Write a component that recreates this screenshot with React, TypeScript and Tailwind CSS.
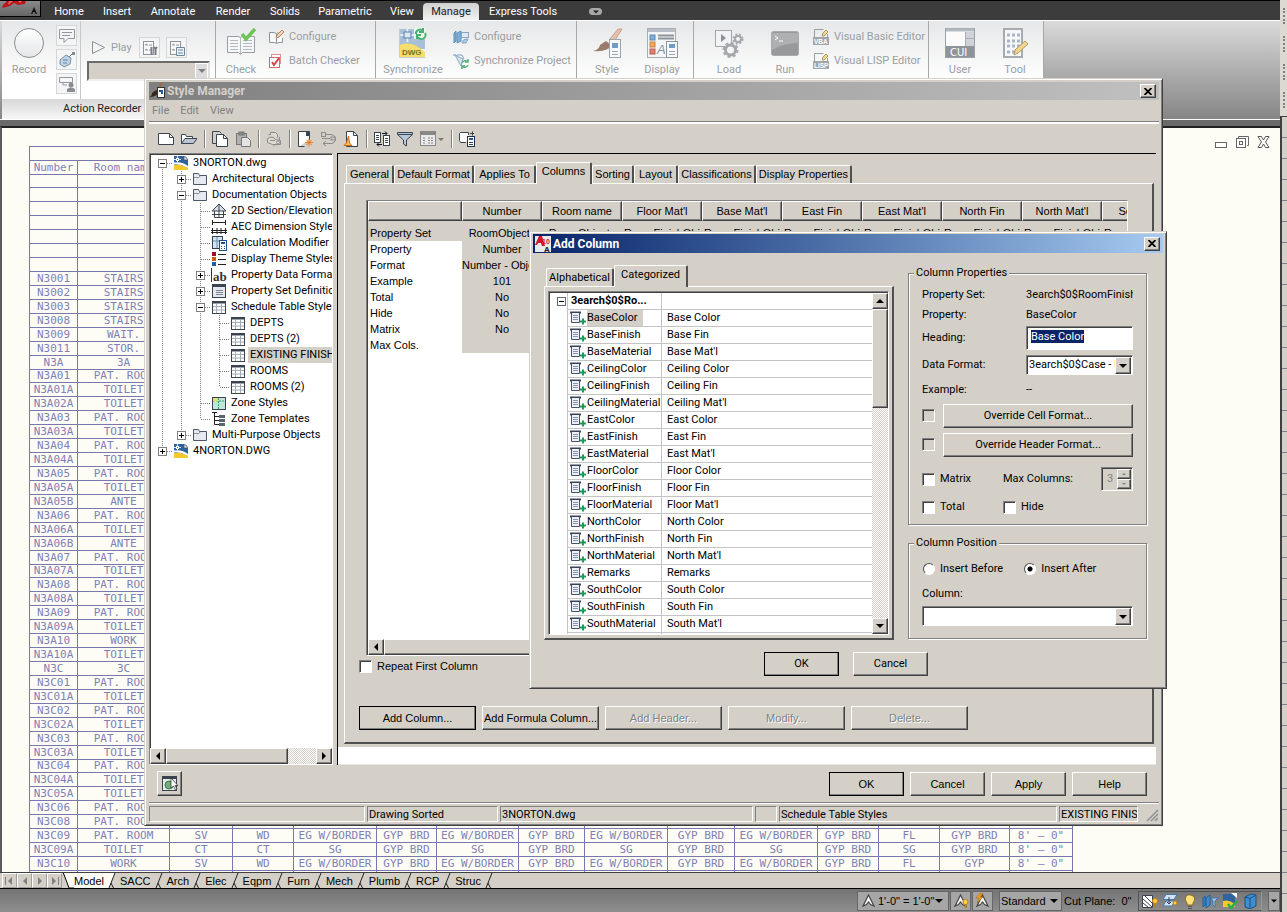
import React from "react"
import clsx from "clsx"

// ============================================================
// Shared styles
// ============================================================

const TAHOMA = "font-[Roboto,'Liberation_Sans',sans-serif]"
const MS_SANS = "font-['Liberation_Sans',Arial,sans-serif]"
const CAD = "font-['DejaVu_Sans_Mono','Liberation_Mono',monospace]"

const RAISED =
  "border border-t-white border-l-white border-b-[#404040] border-r-[#404040] shadow-[inset_-1px_-1px_0_#808080]"
const SUNKEN =
  "border border-t-[#808080] border-l-[#808080] border-b-white border-r-white shadow-[inset_1px_1px_0_#404040]"
const DITHER =
  "bg-[repeating-conic-gradient(#ffffff_0_25%,#d4d0c8_0_50%)] bg-[length:2px_2px]"

// ============================================================
// Small controls
// ============================================================

const PushButton: React.FC<{
  children: React.ReactNode
  className?: string
  isDefault?: boolean
  disabled?: boolean
}> = ({ children, className, isDefault, disabled }) => (
  <button
    disabled={disabled}
    className={clsx(
      "h-6 shrink-0 bg-[#d4d0c8] text-center whitespace-nowrap",
      RAISED,
      isDefault && "outline outline-1 -outline-offset-1 outline-black",
      disabled ? "text-[#808080] [text-shadow:1px_1px_0_#fff]" : "text-black",
      className
    )}
  >
    {children}
  </button>
)

const CloseButton = () => (
  <button
    aria-label="Close"
    className={clsx("flex h-[14px] w-4 items-center justify-center bg-[#d4d0c8]", RAISED)}
  >
    <svg width="8" height="7" viewBox="0 0 8 7" stroke="#000" strokeWidth="1.8">
      <path d="M0.5 0 L7.5 7 M7.5 0 L0.5 7" />
    </svg>
  </button>
)

const ARROWS = {
  up: "M0 6 L4 2 L8 6Z",
  down: "M0 2 L8 2 L4 6Z",
  left: "M6 0 L2 4 L6 8Z",
  right: "M2 0 L6 4 L2 8Z",
}

const Arrow: React.FC<{ dir: keyof typeof ARROWS; size?: number; color?: string }> = ({
  dir,
  size = 8,
  color = "#000",
}) => (
  <svg width={size} height={size} viewBox="0 0 8 8" fill={color}>
    <path d={ARROWS[dir]} />
  </svg>
)

const ScrollButton: React.FC<{ dir: keyof typeof ARROWS }> = ({ dir }) => (
  <button
    aria-label={`Scroll ${dir}`}
    className={clsx("flex size-4 shrink-0 items-center justify-center bg-[#d4d0c8]", RAISED)}
  >
    <Arrow dir={dir} />
  </button>
)

const CheckBox: React.FC<{ label?: string; name: string; disabled?: boolean }> = ({
  label,
  name,
  disabled,
}) => (
  <label className="flex items-center gap-[5px]">
    <input
      type="checkbox"
      aria-label={label ?? name}
      disabled={disabled}
      className={clsx("size-[13px] appearance-none", SUNKEN, disabled ? "bg-[#d4d0c8]" : "bg-white")}
    />
    {label}
  </label>
)

const Radio: React.FC<{ label: string; checked?: boolean }> = ({ label, checked }) => (
  <label className="flex items-center gap-[5px]">
    <input
      type="radio"
      name="position"
      defaultChecked={checked}
      className="size-3 appearance-none rounded-full border border-t-[#505050] border-r-white border-b-white border-l-[#505050] bg-white checked:bg-[radial-gradient(circle,#000_2px,#fff_3px)]"
    />
    {label}
  </label>
)

const Combo: React.FC<{ label: string; value: string; id: string }> = ({ label, value, id }) => (
  <div className={clsx("relative h-5 w-full overflow-hidden bg-white pr-4", SUNKEN)}>
    <select id={id} aria-label={label} className="h-full w-full appearance-none bg-transparent pl-[2px]">
      <option>{value}</option>
    </select>
    <span
      className={clsx(
        "pointer-events-none absolute top-px right-px bottom-0 flex w-4 items-center justify-center bg-[#d4d0c8]",
        RAISED
      )}
    >
      <Arrow dir="down" />
    </span>
  </div>
)

// ============================================================
// Icons
// ============================================================

const Icon: React.FC<{ w?: number; h?: number; children: React.ReactNode }> = ({
  w = 16,
  h = 16,
  children,
}) => (
  <svg
    width={w}
    height={h}
    viewBox={`0 0 ${w} ${h}`}
    fill="none"
    stroke="#3a4450"
    className="shrink-0"
  >
    {children}
  </svg>
)

const DwgIcon = () => (
  <Icon>
    <rect x="1" y="1" width="14" height="14" fill="#2f62a0" stroke="none" />
    <path d="M1 15V10q6-2 14 3v2z" fill="#f3c92c" stroke="none" />
    <path d="M1 9.500q7-1 14 3.500V11Q9 6 1 7.500z" fill="#fff" stroke="none" />
    <path d="M4.500 1v6M1 4.500h7" stroke="#cfe2f5" />
    <rect x="3.500" y="3.500" width="2" height="2" fill="#2f62a0" stroke="#fff" />
    <path d="M11 0h5v5z" fill="#fff" stroke="none" />
    <path d="M11 1v4h4" fill="#dfe6ee" stroke="#555" strokeWidth=".8" />
  </Icon>
)

const FolderIcon = () => (
  <Icon>
    <path d="M1.500 13.500v-11h5l1 2h7v9z" fill="#e6eaf0" stroke="#4b5563" />
    <path d="M2 6.500h5l1-1.500" stroke="#8a94a2" />
  </Icon>
)

const HouseIcon = () => (
  <Icon>
    <path d="M1 8 8 1l7 7z" fill="#d8dee8" />
    <path d="M3.500 8v6.500h9V8M8 1v14M1 11.500h14" />
  </Icon>
)

const DimIcon = () => (
  <Icon>
    <path d="M1.500 1v5M14.500 1v5M1 3.500h14M1.500 9v6M6 9v6M10 9v6M14.500 9v6M0 11.500h16M0 13.500h16" stroke="#222" />
  </Icon>
)

const CalcIcon = () => (
  <Icon>
    <rect x="1.500" y="1.500" width="10" height="12" fill="#cfe3f4" />
    <path d="M6 2v11M2 6h9" stroke="#6b8fb3" />
    <rect x="8.500" y="5.500" width="7" height="10" fill="#fff" stroke="#205090" />
    <path d="M10 8h4" stroke="#205090" strokeWidth="2" />
    <path d="M10 11.500h1M13 11.500h1M10 13.500h1M13 13.500h1" stroke="#205090" />
  </Icon>
)

const ThemeIcon = () => (
  <Icon>
    <path d="M7 3.500h8M7 8.500h8M7 13.500h8" stroke="#222" />
    <rect x="1" y="1" width="4" height="4" fill="#a01020" stroke="none" />
    <rect x="1" y="6" width="4" height="4" fill="#d05a10" stroke="none" />
    <rect x="1" y="11" width="4" height="4" fill="#2060a0" stroke="none" />
  </Icon>
)

const DataFormatIcon = () => (
  <svg width="16" height="16" viewBox="0 0 16 16" className="shrink-0">
    <path d="M.5 1v14" stroke="#333" />
    <text x="2" y="14" fontFamily="Liberation Serif" fontWeight="bold" fontSize="13" fill="#333">
      ab
    </text>
  </svg>
)

const PropSetIcon = () => (
  <Icon>
    <rect x="1.500" y="1.500" width="13" height="13" fill="#e4e8ee" />
    <path d="M2 3h12" strokeWidth="2" />
    <path d="M5 7.500h7M5 9.500h7M5 11.500h7" stroke="#7c8794" />
  </Icon>
)

const TableIcon = () => (
  <Icon>
    <rect x="1.500" y="2.500" width="13" height="12" fill="#fff" />
    <path d="M2 3.500h12" strokeWidth="2" />
    <path d="M2 7.500h12M2 11h12M5.500 5v9M10.500 5v9" stroke="#a4acb6" />
  </Icon>
)

const ZoneIcon = () => (
  <Icon>
    <rect x="1.500" y="2.500" width="13" height="12" fill="#bfe6d8" />
    <path d="M2 6h12M7.500 3v11" stroke="#2f9c78" strokeDasharray="2 1" />
    <path d="M2 3.500h5v3H2z" fill="#ecdc6c" stroke="none" />
  </Icon>
)

const ZoneTemplateIcon = () => (
  <Icon>
    <path d="M1 1.500h5M3.500 1v12.500H8M3.500 5.500H8M3.500 9.500H8" stroke="#222" />
    <path d="M8 5.500h6M8 9.500h6M8 13.500h6" stroke="#5a6470" strokeWidth="3" />
  </Icon>
)

const PropertyIcon = () => (
  <svg width="17" height="15" viewBox="0 0 17 15" fill="none" className="shrink-0">
    <path d="M0 1.500h11" stroke="#3a4258" strokeWidth="2" />
    <path d="M1.500 2v9.500h8V2" fill="#eef0f8" stroke="#4a5268" />
    <path d="M3 4.500h5M3 6.500h5M3 8.500h5" stroke="#8a92b4" />
    <path d="M13 7.500v6M10 10.500h6" stroke="#1e9a58" strokeWidth="2" />
  </svg>
)

const AcadIcon = () => (
  <svg width="16" height="16" viewBox="0 0 16 16" className="shrink-0 font-['Liberation_Sans']">
    <rect width="16" height="16" fill="#e9eaee" />
    <path d="M0 9 4 0h3l3 10H7L6 7H3L2 9z" fill="#d01828" />
    <text x="7" y="8" fontSize="7" fontWeight="bold" fill="#d01828">10</text>
    <text x="9" y="16" fontSize="8" fontWeight="bold" fill="#111">A</text>
  </svg>
)

const BrushIcon = () => (
  <Icon>
    <path d="M0 14 Q3 13 3 10 L7 7 10 9 Q8 14 0 14z" fill="#3a2a1e" stroke="none" />
    <path d="M8 7 13 0" stroke="#a06a48" strokeWidth="2" />
    <rect x="8.500" y="4.500" width="7" height="10" fill="#fff" stroke="#333" />
    <path d="M10 8h3v3" stroke="#2058a0" strokeWidth="2" />
  </Icon>
)

/* Style Manager toolbar */

const TOOLBAR: ({ name: string; icon: React.ReactNode } | null)[] = [
  { name: "New drawing", icon: <Icon><path d="M.5 13.500v-11h11l4 4v7z" fill="#fff" /><path d="M11.500 2.500v4h4" /></Icon> },
  { name: "Open drawing", icon: <Icon><path d="M.5 12.500v-9h4l1 2h6v2" fill="#fff" /><path d="M.5 12.500 4 7.500h12l-3.500 5z" fill="#b8c4d4" /></Icon> },
  null,
  { name: "Copy", icon: <Icon><path d="M.5 12.500v-12h7l2 2M.5 12.500H4" /><path d="M4.500 15.500v-12h7l4 4v8z" fill="#fff" /><path d="M11.500 3.500v4h4" /></Icon> },
  { name: "Paste", icon: <Icon><g stroke="#777"><rect x="1.500" y="2.500" width="10" height="11" fill="#b0b0b0" /><rect x="4" y="1" width="5" height="3" fill="#888" /><path d="M6.500 15.500v-9h6l3 3v6z" fill="#e4e4e4" /></g></Icon> },
  null,
  { name: "Edit style", icon: <Icon><g stroke="#8a8a8a"><path d="M2.500 3.500h2v-2h5l2 2v3M1.500 7.500q5-3 8 1l5 1v4h-8l-5-2z" fill="#dedbd4" /><path d="M4 9.500h5M8 13.500v2M13.500 6v3" /><circle cx="12" cy="11.500" r="1.500" /></g></Icon> },
  null,
  { name: "New style", icon: <Icon><path d="M1.500 15.500V.5h11V9M1.500 15.500h6" fill="#fff" /><path d="M9 1h4v4H9z" fill="#345" stroke="none" /><path d="M12 7.500v8M8 11.500h8M9.500 9l5 5M14.500 9l-5 5" stroke="#f07818" /></Icon> },
  { name: "Set from", icon: <Icon><g stroke="#8a8a8a"><rect x="1.500" y="1.500" width="4" height="4" /><path d="M5.500 3.500H11a4 4 0 0 1 0 9H3M6 10l-3 2.500L6 15M2 7.500h8" /><rect x="11" y="6" width="4" height="3" fill="#ccc" /></g></Icon> },
  { name: "Purge", icon: <Icon><path d="M3.500 15.500V.5h7l4 4v11z" fill="#fff" /><path d="M10.500.5v4h4" /><path d="M1 14.500h8L6.500 12 5.500 5 3.500 12z" fill="#f6c060" stroke="#d06a10" /></Icon> },
  null,
  { name: "Toggle view", icon: <Icon><rect x=".5" y="1.500" width="6" height="10" fill="#fff" /><rect x="9.500" y="4.500" width="6" height="10" fill="#fff" /><path d="M2 4.500h3M2 6.500h3M2 8.500h3M11 7.500h3M11 9.500h3M11 11.500h3" /><path d="M8 2.500h5M11 .5l2 2-2 2M8 13.500H3M5 11.500l-2 2 2 2" stroke="#111" /></Icon> },
  { name: "Filter", icon: <Icon><path d="M.5 1.500h15v2L9.500 9v6l-3-2V9L.5 3.500z" fill="#b8c8d8" /><path d="M1 3.500h14" /></Icon> },
  { name: "Views", icon: <svg width="24" height="16" viewBox="0 0 24 16" fill="none" stroke="#888" className="shrink-0"><rect x=".5" y=".5" width="15" height="14" fill="#e8e8e8" /><path d="M1 2.500h14" strokeWidth="3" /><path d="M3 7h3M8 7h5M3 9.500h3M8 9.500h5M3 12h3M8 12h5" strokeDasharray="2 1" /><path d="M18 7h6l-3 3z" fill="#777" stroke="none" /></svg> },
  null,
  { name: "Inline edit", icon: <Icon><path d="M7 11.500H1.500l-1-2v-7l1-1h8V4" fill="#fff" /><rect x="8.500" y="5.500" width="7" height="10" fill="#fff" stroke="#20304a" /><path d="M10 8h4" stroke="#2058a0" strokeWidth="2" /><path d="M10 11.500h4M10 13.500h4M11 2.500h4M13.500 .5v4" /></Icon> },
]

/* Ribbon, large */

const CheckStdIcon = () => (
  <Icon w={30} h={30}>
    <g stroke="#9a9ea4">
      <path d="M1.500 8.500h11l2 1 2-1h12v16h-12l-2 2-2-2h-11z" fill="#f6f7f8" />
      <path d="M14.500 10v16M4 12.500h8M4 15.500h8M4 18.500h8M4 21.500h8M17 12.500h9M17 15.500h9M17 18.500h9M17 21.500h9" stroke="#b5b9be" />
    </g>
    <path d="M16 6l4 5 9-10" stroke="#6fc455" strokeWidth="3.500" />
  </Icon>
)

const SyncIcon = () => (
  <Icon w={28} h={30}>
    <rect x="1" y="1" width="25" height="20" fill="#a9c0d8" stroke="none" />
    <path d="M1 17 Q12 12 26 24v5H1z" fill="#f4df6a" stroke="none" />
    <path d="M1 7h15M8.500 1v13" stroke="#eef4fa" strokeWidth="1.500" />
    <rect x="5" y="4" width="7" height="6" stroke="#5d7fa8" fill="#dce8f4" />
    <rect x="15" y="0" width="12" height="11" fill="#eef6f0" stroke="none" />
    <path d="M17 6a4 4 0 0 1 7-3M26 5a4 4 0 0 1-7 4M24 0v4h-4M18 11V7h4" stroke="#46b070" strokeWidth="2" />
    <text x="3" y="27" fontFamily="Liberation Sans" fontWeight="bold" fontSize="8" fill="#77702c" stroke="none">DWG</text>
    <path d="M.5.500v29h26" stroke="#c9cdd2" />
  </Icon>
)

const StyleIcon = () => (
  <Icon w={30} h={30}>
    <path d="M17 12 26 1l4 0-8 13z" fill="#e5bfa9" stroke="#c7a48e" />
    <path d="M1 23Q7 22 8 17L14 13l5 4Q17 24 1 23z" fill="#9a7a6a" stroke="none" />
    <rect x="17.500" y="11.500" width="11" height="18" fill="#f8f9fa" stroke="#9aa4ae" />
    <path d="M20 15h6v5h-6z" fill="#6f9cc8" stroke="none" />
    <path d="M20 23.500h6M20 26.500h6" stroke="#9aa4ae" />
  </Icon>
)

const DisplayIcon = () => (
  <Icon w={32} h={32}>
    <rect x="1.500" y="1.500" width="28" height="29" fill="#f3f5f7" stroke="#a6adb5" />
    <path d="M2 3.500h27" stroke="#b9bfc6" strokeWidth="3" />
    <rect x="4" y="8" width="5" height="5" fill="#7fb0dc" stroke="#5d87b0" />
    <rect x="4" y="15" width="5" height="5" fill="#f5a760" stroke="#cf8440" />
    <rect x="4" y="22" width="5" height="5" fill="#e07f6d" stroke="#b75f50" />
    <path d="M12 8.500h16M12 11.500h16" stroke="#8c949c" strokeWidth="2" />
    <text x="11" y="27" fontFamily="Liberation Sans" fontStyle="italic" fontSize="13" fill="#8c949c" stroke="none">A</text>
    <rect x="20.500" y="14.500" width="11" height="16" fill="#f8f9fa" stroke="#8c949c" />
    <rect x="23" y="17" width="6" height="4" fill="#6f9cc8" stroke="none" />
    <path d="M23 24.500h6M23 27.500h6" stroke="#9aa4ae" />
  </Icon>
)

const LoadIcon = () => (
  <Icon w={30} h={30}>
    <rect x="1.500" y="2.500" width="16" height="16" fill="#f2f3f4" stroke="#a2a6aa" />
    <path d="M7 6v8l5-4z" fill="#8c9196" stroke="none" />
    <circle cx="16.500" cy="22" r="5" stroke="#a4a8ac" strokeWidth="3" fill="#f6f6f6" />
    <circle cx="16.500" cy="22" r="7" stroke="#a4a8ac" strokeWidth="2" strokeDasharray="3 2.500" />
    <circle cx="24" cy="11" r="3" stroke="#a4a8ac" strokeWidth="2" fill="#f6f6f6" />
    <circle cx="24" cy="11" r="4.500" stroke="#a4a8ac" strokeWidth="2" strokeDasharray="2 1.600" />
  </Icon>
)

const RunIcon = () => (
  <Icon w={30} h={30}>
    <rect x="1.500" y="3.500" width="27" height="24" rx="2" fill="#98999b" stroke="#a8aaac" />
    <path d="M2 5h26v10q-14 0-26 7z" fill="#aeb0b2" stroke="none" />
    <path d="M5 8l3 2-3 2M9 13h4" stroke="#fff" />
  </Icon>
)

const CuiIcon = () => (
  <Icon w={30} h={30}>
    <rect x=".5" y=".5" width="29" height="29" fill="#fbfbfb" stroke="#9aa0a8" />
    <path d="M1 2h28" stroke="#b4bac2" strokeWidth="3" />
    <rect x="20" y="4" width="9" height="14" fill="#cfd3d8" stroke="none" />
    <path d="M20.500 4v15M21 10.500h8" stroke="#a9afb6" />
    <rect x="1" y="18" width="28" height="11" fill="#8f949b" stroke="none" />
    <text x="5" y="27.500" fontFamily="DejaVu Sans" fontSize="10" fill="#fff" stroke="none">CUI</text>
  </Icon>
)

const ToolPaletteIcon = () => (
  <Icon w={27} h={30}>
    <path d="M2 1h18v28H2z" fill="#f6f7f8" stroke="#a6abb1" strokeWidth="2" />
    <path d="M5 7h13M5 13h13M5 18h13M5 24h8" stroke="#a9b4c4" strokeWidth="3" strokeDasharray="3 2" />
    <path d="M12 27l1-5 10-9 3 3-10 9z" fill="#f0d68c" stroke="#b39b60" />
  </Icon>
)

/* Ribbon, small */

const BookPenIcon = () => (
  <Icon>
    <path d="M1.500 3.500h5l2 1 2-1M1.500 3.500v10h5l2 1 2-1h4V9M8.500 5v9" stroke="#8f9399" fill="#f8f8f8" />
    <path d="M8 9l1-3 5-5 2 2-5 5z" fill="#f2d0ac" stroke="#b58c70" />
  </Icon>
)

const BatchIcon = () => (
  <Icon>
    <rect x="3.500" y="1.500" width="9" height="9" fill="#fff" stroke="#e09090" />
    <rect x="1.500" y="4.500" width="10" height="10" fill="#fff" stroke="#d86a6a" />
    <path d="M4 9l2 3 5-7" stroke="#cc4a4a" strokeWidth="2" />
  </Icon>
)

const CubeCfgIcon = () => (
  <Icon>
    <path d="M1 4l2-2v10l-2 2zM4 4l4-2v10l-4 2z" fill="#7fb0dc" stroke="#5b8fbe" />
    <rect x="8.500" y="3.500" width="7" height="5" fill="#dfeaf4" stroke="#88a4c0" />
    <path d="M9 14q0-4 6-4l-2 4z" fill="#a8c8e4" stroke="#88a4c0" />
  </Icon>
)

const CubeSyncIcon = () => (
  <Icon>
    <path d="M0 2l3 0 5 7M4 2h5l2 4" stroke="#7f9fbc" />
    <path d="M2 2l6 11 2-7z" fill="#d5e4f0" stroke="#8aa8c4" />
    <path d="M9 10a3.500 3.500 0 0 1 6-1M15 12a3.500 3.500 0 0 1-6 1M15 6v3h-3M9 16v-3h3" stroke="#56b078" strokeWidth="1.500" />
  </Icon>
)

const EditorIcon: React.FC<{ tag: string }> = ({ tag }) => (
  <Icon>
    <path d="M1.500 8V.5h9M14.500 5v3" stroke="#9a9ea4" />
    <path d="M9 7l1-3 3-3 2 2-4 4z" fill="#f2d890" stroke="#b09a60" />
    <rect x="0" y="8" width="16" height="8" fill="#a2a6ac" stroke="none" />
    <text x="1" y="14.500" fontFamily="Liberation Sans" fontWeight="bold" fontSize="6.500" fill="#fff" stroke="none">{tag}</text>
  </Icon>
)

const BubbleIcon = () => (
  <Icon><path d="M.5 1.500h15v9H9l-4 4v-4H.5zM3 4.500h10M3 7.500h8" stroke="#93979c" /></Icon>
)
const RequestIcon = () => (
  <Icon><path d="M1 8l6-5 5 3-1 6-6 3-4-3z" fill="#bfd4e6" stroke="#7f8c98" /><path d="M4 8h5M4 11h4M10 5l4-4" stroke="#5f87ac" /><rect x="13" y="0" width="3" height="3" fill="#888" stroke="none" /></Icon>
)
const UserInputIcon = () => (
  <Icon><path d="M.5 1.500h13v5H.5zM4 6v3h4" stroke="#93979c" /><circle cx="12" cy="9" r="2.500" fill="#8a8e92" stroke="none" /><path d="M8 16v-3q4-3 8 0v3z" fill="#8a8e92" stroke="none" /></Icon>
)
const ActionIcon: React.FC<{ alt?: boolean }> = ({ alt }) => (
  <Icon>
    <rect x="1.500" y="1.500" width="10" height="13" fill="#f8f8f8" stroke="#8f9398" />
    <path d="M3 5l2-1v2M3 10l2-1v2M7 5h3M7 10h3" stroke="#8f9398" />
    {alt ? (
      <path d="M7.500 7.500h8v8h-8zM9 10h5M9 13h5" fill="#eef2f6" stroke="#6f87a0" />
    ) : (
      <path d="M9.500 7v8M13.500 15V9M12 7l1.500 2L15 7" stroke="#7a7e84" strokeWidth="2" />
    )}
  </Icon>
)

// ============================================================
// Ribbon
// ============================================================

const MENU = [
  { label: "Home", width: "w-12" },
  { label: "Insert", width: "w-12" },
  { label: "Annotate", width: "w-16" },
  { label: "Render", width: "w-14" },
  { label: "Solids", width: "w-12" },
  { label: "Parametric", width: "w-[72px]" },
  { label: "View", width: "w-[42px]" },
  { label: "Manage", width: "w-14", active: true },
  { label: "Express Tools", width: "w-[88px]" },
]

const MenuBar = () => (
  <nav className="flex h-5 shrink-0 items-end border-t border-black bg-[#3c3c3c] text-[11px] text-white">
    <button
      aria-label="Application menu"
      className="mr-1 h-4 w-[41px] self-start border-r border-b border-black bg-linear-to-b from-[#8a8a8a] to-[#666]"
    >
      <svg width="40" height="15" viewBox="0 0 40 15">
        <path d="M3 4 8 -1h18l-1 4-7 1-4-2-4 3-8 2z" fill="#b8141c" />
        <path d="M9 0h4l-5 4zM17 -1h6l-3 3z" fill="#f06a60" />
        <path d="M31 13l3-7 3 7h-1.500l-.8-2h-1.500l-.8 2z" fill="#111" />
      </svg>
    </button>
    {MENU.map((m) => (
      <button
        key={m.label}
        className={clsx(
          "h-[17px] text-center leading-[15px] whitespace-nowrap",
          m.width,
          m.active && "rounded-t-sm bg-linear-to-b from-[#d0d0d0] to-[#f2f2f2] text-[#222]"
        )}
      >
        {m.label}
      </button>
    ))}
    <span className="mb-[5px] ml-[22px] flex h-[7px] w-[13px] items-center justify-center rounded-sm bg-[#a8a8a8]">
      <Arrow dir="down" size={6} color="#222" />
    </span>
  </nav>
)

const BigTool: React.FC<{ icon: React.ReactNode; label: string; className: string }> = ({
  icon,
  label,
  className,
}) => (
  <button className={clsx("flex flex-col items-center gap-[3px] pt-[6px]", className)}>
    <span className="flex h-8 items-center">{icon}</span>
    <span className="leading-4">{label}</span>
  </button>
)

const SmallTool: React.FC<{ icon: React.ReactNode; label: string }> = ({ icon, label }) => (
  <button className="flex h-6 items-center gap-[5px] whitespace-nowrap">
    {icon}
    {label}
  </button>
)

const Panel: React.FC<{ className: string; children: React.ReactNode }> = ({ className, children }) => (
  <div
    className={clsx(
      "flex shrink-0 items-start border-r border-[#a8a8a8] bg-linear-to-b from-[#e6e7e8] to-white to-60%",
      className
    )}
  >
    {children}
  </div>
)

const FRAMED = "flex items-center justify-center border border-[#d4d6d8] bg-[#f4f5f6]"

const Ribbon = () => (
  <div className="flex h-[100px] shrink-0 border-y border-white bg-linear-to-b from-[#dadada] to-[#868686] pl-[2px] text-[11px] text-[#9a9ea2]">
    <Panel className="w-[214px] flex-col">
      <div className="flex w-full flex-1">
        <div className="flex w-[54px] flex-col items-center gap-[3px] pt-[6px]">
          <span className="flex h-8 items-center">
            <span className="size-[30px] rounded-full border border-[#8c8c8c] bg-linear-to-b from-white to-[#e4e6e8]" />
          </span>
          <span className="leading-4">Record</span>
        </div>
        <div className="flex w-[25px] flex-col gap-[3px] border-r border-[#c8c8c8] pt-1">
          <button aria-label="Message" className={clsx("size-[21px]", FRAMED)}><BubbleIcon /></button>
          <button aria-label="Pause" className={clsx("size-[21px]", FRAMED)}><RequestIcon /></button>
          <button aria-label="Request input" className={clsx("size-[21px]", FRAMED)}><UserInputIcon /></button>
        </div>
        <div className="flex flex-1 flex-col pt-4 pl-[6px]">
          <div className="flex h-[21px] items-center gap-[6px] pl-[5px]">
            <svg width="13" height="13" viewBox="0 0 13 13" fill="#f4f4f4" stroke="#8c9094">
              <path d="M.5.500v12l12-6z" />
            </svg>
            <span className="w-[22px]">Play</span>
            <button aria-label="Preference" className={clsx("size-[21px]", FRAMED)}><ActionIcon /></button>
            <button aria-label="Manage macros" className={clsx("size-[21px]", FRAMED)}><ActionIcon alt /></button>
          </div>
          <div className="mt-[3px] flex h-5 w-[123px] justify-end border-2 border-[#6c6c6c] border-r-[#e0e0e0] border-b-[#f0f0f0] bg-[#d4d0c8]">
            <span className="flex w-[13px] items-center justify-center border border-white bg-[#dcdcdc]">
              <Arrow dir="down" color="#808080" />
            </span>
          </div>
        </div>
      </div>
      <div className="h-5 w-full bg-linear-to-b from-[#d8d8d8] to-[#f6f6f6] pl-[61px] leading-[19px] text-[#222]">
        Action Recorder
      </div>
    </Panel>
    <Panel className="w-[160px]">
      <BigTool className="w-[50px]" icon={<CheckStdIcon />} label="Check" />
      <div className="pt-1 pl-[2px]">
        <SmallTool icon={<BookPenIcon />} label="Configure" />
        <SmallTool icon={<BatchIcon />} label="Batch Checker" />
      </div>
    </Panel>
    <Panel className="w-[201px]">
      <BigTool className="w-[74px]" icon={<SyncIcon />} label="Synchronize" />
      <div className="pt-1 pl-[3px]">
        <SmallTool icon={<CubeCfgIcon />} label="Configure" />
        <SmallTool icon={<CubeSyncIcon />} label="Synchronize Project" />
      </div>
    </Panel>
    <Panel className="w-[117px]">
      <BigTool className="w-[60px]" icon={<StyleIcon />} label="Style" />
      <BigTool className="w-[50px]" icon={<DisplayIcon />} label="Display" />
    </Panel>
    <Panel className="w-[235px]">
      <BigTool className="w-[70px]" icon={<LoadIcon />} label="Load" />
      <BigTool className="w-[42px]" icon={<RunIcon />} label="Run" />
      <div className="pt-1 pl-[7px]">
        <SmallTool icon={<EditorIcon tag="VBA" />} label="Visual Basic Editor" />
        <SmallTool icon={<EditorIcon tag="LISP" />} label="Visual LISP Editor" />
      </div>
    </Panel>
    <Panel className="w-[115px]">
      <BigTool className="w-[62px]" icon={<CuiIcon />} label="User" />
      <BigTool className="w-[48px]" icon={<ToolPaletteIcon />} label="Tool" />
    </Panel>
  </div>
)

// ============================================================
// Drawing (room finish schedule)
// ============================================================

const ROOMS: [string, string][] = [
  ["N3001", "STAIRS"], ["N3002", "STAIRS"], ["N3003", "STAIRS"], ["N3008", "STAIRS"],
  ["N3009", "WAIT."], ["N3011", "STOR."], ["N3A", "3A"], ["N3A01", "PAT. ROOM"],
  ["N3A01A", "TOILET"], ["N3A02A", "TOILET"], ["N3A03", "PAT. ROOM"], ["N3A03A", "TOILET"],
  ["N3A04", "PAT. ROOM"], ["N3A04A", "TOILET"], ["N3A05", "PAT. ROOM"], ["N3A05A", "TOILET"],
  ["N3A05B", "ANTE"], ["N3A06", "PAT. ROOM"], ["N3A06A", "TOILET"], ["N3A06B", "ANTE"],
  ["N3A07", "PAT. ROOM"], ["N3A07A", "TOILET"], ["N3A08", "PAT. ROOM"], ["N3A08A", "TOILET"],
  ["N3A09", "PAT. ROOM"], ["N3A09A", "TOILET"], ["N3A10", "WORK"], ["N3A10A", "TOILET"],
  ["N3C", "3C"], ["N3C01", "PAT. ROOM"], ["N3C01A", "TOILET"], ["N3C02", "PAT. ROOM"],
  ["N3C02A", "TOILET"], ["N3C03", "PAT. ROOM"], ["N3C03A", "TOILET"], ["N3C04", "PAT. ROOM"],
  ["N3C04A", "TOILET"], ["N3C05A", "TOILET"], ["N3C06", "PAT. ROOM"], ["N3C08", "PAT. ROOM"],
]

const FULL_ROWS = [
  ["N3C09", "PAT. ROOM", "SV", "WD", "EG W/BORDER", "GYP BRD", "EG W/BORDER", "GYP BRD", "EG W/BORDER", "GYP BRD", "EG W/BORDER", "GYP BRD", "FL", "GYP BRD", "8' – 0\""],
  ["N3C09A", "TOILET", "CT", "CT", "SG", "GYP BRD", "SG", "GYP BRD", "SG", "GYP BRD", "SG", "GYP BRD", "SG", "GYP BRD", "8' – 0\""],
  ["N3C10", "WORK", "SV", "WD", "EG W/BORDER", "GYP BRD", "EG W/BORDER", "GYP BRD", "EG W/BORDER", "GYP BRD", "EG W/BORDER", "GYP BRD", "FL", "GYP", "8' – 0\""],
]

const BLANK = Array(15).fill("")
const pad = (cells: string[]) => [...cells, ...BLANK].slice(0, 15)

const SCHEDULE: string[][] = [
  pad(["Number", "Room name"]),
  ...Array(7).fill(BLANK),
  ...ROOMS.map(pad),
  ...FULL_ROWS,
  BLANK,
]

const COL_WIDTHS = [
  "w-12", "w-[92px]", "w-[63px]", "w-[61px]", "w-[83px]", "w-[60px]", "w-[82px]", "w-[66px]",
  "w-[83px]", "w-[67px]", "w-[83px]", "w-[61px]", "w-[61px]", "w-[70px]", "w-[63px]",
]

const Drawing = () => (
  <div className="relative min-h-0 flex-1 overflow-hidden border-t-2 border-l-2 border-t-[#222] border-l-[#5c5c5c] bg-[#fdfdf5] pt-[18px] pl-[27px]">
    <table
      className={clsx(
        "w-[1044px] table-fixed border-collapse text-center text-[11px] leading-[12px] text-[#8080b6]",
        CAD
      )}
    >
      <colgroup>
        {COL_WIDTHS.map((w, i) => (
          <col key={i} className={w} />
        ))}
      </colgroup>
      <tbody>
        <tr className="h-[14px]">
          <td colSpan={15} className="border border-[#7878ae] p-0" />
        </tr>
        {SCHEDULE.map((cells, r) => (
          // a 13px row every so often keeps the pitch just under 14
          <tr key={r} className={r % 14 === 1 ? "h-[13px]" : "h-[14px]"}>
            {cells.map((c, i) => (
              <td key={i} className="border border-[#7878ae] p-0 whitespace-nowrap">
                {c}
              </td>
            ))}
          </tr>
        ))}
      </tbody>
    </table>
    <div className="absolute top-2 right-[10px] flex items-end gap-2">
      <svg width="13" height="12" viewBox="0 0 13 12" fill="#fff" stroke="#666">
        <rect x=".5" y="6.500" width="11" height="5" />
      </svg>
      <svg width="13" height="12" viewBox="0 0 13 12" fill="#fff" stroke="#666">
        <path d="M2.500 2V.5h10v9H11" />
        <rect x=".5" y="2.500" width="9" height="9" />
        <rect x="3.500" y="5.500" width="3" height="3" />
      </svg>
      <svg width="13" height="12" viewBox="0 0 13 12" fill="#fff" stroke="#555">
        <path d="M1 .5h3.500L6.500 4l2-3.500H12L8.500 6l3.500 5.500H8.500L6.500 8l-2 3.500H1L4.500 6z" />
      </svg>
    </div>
  </div>
)

const LAYOUTS = ["Model", "SACC", "Arch", "Elec", "Eqpm", "Furn", "Mech", "Plumb", "RCP", "Struc"]

const LayoutTabs = () => (
  <div className={clsx("flex h-[17px] shrink-0 border-t border-b border-t-[#404040] border-b-black bg-[#d4d0c8] pl-[2px] text-[11px]", MS_SANS)}>
    {(["left", "left", "right", "right"] as const).map((dir, i) => (
      <button
        key={i}
        aria-label={["First", "Previous", "Next", "Last"][i]}
        className="flex w-[15px] items-center justify-center border border-t-white border-r-[#a0a0a0] border-b-[#a0a0a0] border-l-white"
      >
        {i === 0 && <span className="h-2 w-px bg-[#808080]" />}
        <Arrow dir={dir} color="#808080" />
        {i === 3 && <span className="h-2 w-px bg-[#808080]" />}
      </button>
    ))}
    {LAYOUTS.map((name, i) => (
      <React.Fragment key={name}>
        {i === 0 && (
          <svg width="12" height="15" viewBox="0 0 12 15" stroke="#000" fill="#fdfdf5">
            <path d="M1 -1 7 15H13V-1z" />
          </svg>
        )}
        <button className={clsx("leading-[17px]", i === 0 && "bg-[#fdfdf5]")}>{name}</button>
        <svg width="16" height="15" viewBox="0 0 16 15" fill="none" stroke="#222">
          {i === 0 && <path d="M0 -1H11L5 15H0z" fill="#fdfdf5" stroke="none" />}
          <path d="M11 0 5 15M7 10l2.500 5" />
        </svg>
      </React.Fragment>
    ))}
  </div>
)

const ScaleGlyph = () => (
  <path d="M7.500 2 2 13l3.500-1.500L7.500 9l2 2.500L13 13z" fill="#f4f4f4" stroke="#444" strokeWidth="1.200" />
)

const TRAY_BUTTON = "flex h-5 items-center border border-[#666] bg-[#a6a6a6] whitespace-nowrap"

const StatusBar = () => (
  <footer className={clsx("flex h-[23px] shrink-0 items-start justify-end bg-linear-to-b from-[#747474] to-[#8e8e8e] pt-[2px] text-[11px] text-black", MS_SANS)}>
    <button className={clsx("w-[92px] gap-px pl-[3px]", TRAY_BUTTON)}>
      <Icon><ScaleGlyph /></Icon>
      1'-0" = 1'-0"
      <Arrow dir="down" />
    </button>
    <button aria-label="Annotation visibility" className={clsx("ml-px w-[21px] justify-center", TRAY_BUTTON)}>
      <Icon><ScaleGlyph /><circle cx="12.500" cy="9" r="2.500" fill="#ffd24a" stroke="#c08010" /><path d="M12.500 12v3" stroke="#c08010" strokeWidth="2" /></Icon>
    </button>
    <button aria-label="Automatic scale" className={clsx("ml-px w-[21px] justify-center", TRAY_BUTTON)}>
      <Icon><ScaleGlyph /><path d="M5 0 1 5h3l-2 5 6-6H5l3-4z" fill="#f0a020" stroke="#b06a10" strokeWidth=".6" /></Icon>
    </button>
    <button className={clsx("ml-[6px] w-[63px] gap-1 px-px", TRAY_BUTTON)}>
      Standard
      <Arrow dir="down" />
    </button>
    <span className="flex h-5 w-[76px] items-center gap-[6px] pl-[2px] whitespace-nowrap">
      <span>Cut Plane:</span>
      <span>0"</span>
    </span>
    <div className="flex h-5 w-[124px] items-center gap-[4px] border border-[#555] border-r-[#999] pl-[3px]">
      <Icon><path d="M.5 2.500h10v12H.5zM1 6l9 8M1 10l5 4M3 3l7 7" fill="#fff" /><circle cx="13" cy="8" r="2.500" fill="#ffd24a" stroke="#c08010" /><path d="M13 11v3" stroke="#c08010" strokeWidth="2" /></Icon>
      <Icon><path d="M4 1.500h11l-3 5H1zM4 8h9l-3 5H1z" fill="#cfe4f6" stroke="#4878a8" /><path d="M7 4v7M5 9l2 2 2-2" /><circle cx="13" cy="10" r="2" fill="#ffd24a" stroke="#c08010" /></Icon>
      <Icon><path d="M5 10Q2 7 4 3.500t8 0Q14 7 11 10v2H5z" fill="#fbe27a" stroke="#8a6a20" /><path d="M6 13.500h4M6 15.500h4" stroke="#555" /></Icon>
      <Icon><path d="M1 5l2-2v9l-2 2zM4 5l4-3v10l-4 3z" fill="#3f8fd0" stroke="#1f5f98" /><path d="M9 5h7l-3 3v6l-2-2V8z" fill="#9cc8ec" stroke="#3f78a8" /></Icon>
      <Icon><rect x="1" y="1" width="12" height="13" fill="#2f62a0" stroke="none" /><path d="M1 14V8q6-2 12 3v3z" fill="#f3c92c" stroke="none" /><path d="M6 11l3 4 6-7" stroke="#28b040" strokeWidth="2.500" /><path d="M9 0h6v5z" fill="#fff" stroke="none" /></Icon>
      <Icon><path d="M3 4l6-3 5 1v11l-6 3-5-2z" fill="#3f8fd0" stroke="#1f4f80" /><path d="M3 4l5 1.500V15M8 5.500 14 2" stroke="#1f4f80" /></Icon>
    </div>
    <button aria-label="Tray settings" className={clsx("ml-[6px] w-3 justify-center", TRAY_BUTTON)}>
      <Arrow dir="down" size={6} />
    </button>
  </footer>
)

// ============================================================
// Style Manager - tree
// ============================================================

/** One 19px tree column: v line, t tee, l elbow, p/m expander, P/M last/first expander */
const Guide: React.FC<{ kind: string }> = ({ kind }) => {
  const box = "pPmM".includes(kind)
  const top = "vtlpmP".includes(kind)
  const bottom = "vtpmM".includes(kind)
  return (
    <svg width="19" height="16" viewBox="0 0 19 16" fill="none" className="shrink-0">
      <g stroke="#808080" strokeDasharray="1 1">
        {top && <path d="M9.500 0v8" />}
        {bottom && <path d="M9.500 8v8" />}
        {kind !== "v" && <path d="M10 8.500h9" />}
      </g>
      {box && <rect x="5.500" y="4.500" width="8" height="8" fill="#fff" stroke="#808080" />}
      {box && <path d="M7 8.500h5" stroke="#000" />}
      {"pP".includes(kind) && <path d="M9.500 6v5" stroke="#000" />}
    </svg>
  )
}

interface TreeNode {
  guides: string
  label: string
  icon: React.ReactNode
  selected?: boolean
}

const TREE: TreeNode[] = [
  { guides: "M", label: "3NORTON.dwg", icon: <DwgIcon /> },
  { guides: "vp", label: "Architectural Objects", icon: <FolderIcon /> },
  { guides: "vm", label: "Documentation Objects", icon: <FolderIcon /> },
  { guides: "vvt", label: "2D Section/Elevation Styles", icon: <HouseIcon /> },
  { guides: "vvt", label: "AEC Dimension Styles", icon: <DimIcon /> },
  { guides: "vvt", label: "Calculation Modifier Styles", icon: <CalcIcon /> },
  { guides: "vvt", label: "Display Theme Styles", icon: <ThemeIcon /> },
  { guides: "vvp", label: "Property Data Formats", icon: <DataFormatIcon /> },
  { guides: "vvp", label: "Property Set Definitions", icon: <PropSetIcon /> },
  { guides: "vvm", label: "Schedule Table Styles", icon: <TableIcon /> },
  { guides: "vvvt", label: "DEPTS", icon: <TableIcon /> },
  { guides: "vvvt", label: "DEPTS (2)", icon: <TableIcon /> },
  { guides: "vvvt", label: "EXISTING FINISHES", icon: <TableIcon />, selected: true },
  { guides: "vvvt", label: "ROOMS", icon: <TableIcon /> },
  { guides: "vvvl", label: "ROOMS (2)", icon: <TableIcon /> },
  { guides: "vvt", label: "Zone Styles", icon: <ZoneIcon /> },
  { guides: "vvl", label: "Zone Templates", icon: <ZoneTemplateIcon /> },
  { guides: "vP", label: "Multi-Purpose Objects", icon: <FolderIcon /> },
  { guides: "P", label: "4NORTON.DWG", icon: <DwgIcon /> },
]

const StyleTree = () => (
  <div className={clsx("flex w-[184px] shrink-0 flex-col bg-white", SUNKEN, TAHOMA)}>
    <ul className="min-h-0 flex-1 overflow-hidden pt-px pl-[3px]">
      {TREE.map((n) => (
        <li key={n.label} className="flex h-4 items-center leading-4 whitespace-nowrap">
          {n.guides.split("").map((g, i) => (
            <Guide key={i} kind={g} />
          ))}
          <span className="ml-px shrink-0">{n.icon}</span>
          <span className={clsx("ml-[2px] px-[2px]", n.selected && "bg-[#d4d0c8]")}>{n.label}</span>
        </li>
      ))}
    </ul>
    <div className={clsx("flex h-4", DITHER)}>
      <ScrollButton dir="left" />
      <span className={clsx("w-[122px] bg-[#d4d0c8]", RAISED)} />
      <span className="flex-1" />
      <ScrollButton dir="right" />
    </div>
  </div>
)

// ============================================================
// Style Manager - Columns tab
// ============================================================

const TABS = [
  { label: "General", width: "w-12" },
  { label: "Default Format", width: "w-20" },
  { label: "Applies To", width: "w-[62px]" },
  { label: "Columns", width: "w-14", active: true },
  { label: "Sorting", width: "w-[42px]" },
  { label: "Layout", width: "w-[44px]" },
  { label: "Classifications", width: "w-[78px]" },
  { label: "Display Properties", width: "w-24" },
]

const Tab: React.FC<{ label: string; className: string; active?: boolean }> = ({
  label,
  className,
  active,
}) => (
  <button
    role="tab"
    aria-selected={!!active}
    className={clsx(
      "flex justify-center rounded-t-xs border-t border-r-2 border-l border-t-white border-r-[#505050] border-l-white bg-[#d4d0c8] leading-[17px] whitespace-nowrap",
      active ? "z-10 -mb-px h-[22px]" : "h-[18px]",
      className
    )}
  >
    {label}
  </button>
)

const COLUMNS = [
  "Number", "Room name", "Floor Mat'l", "Base Mat'l", "East Fin", "East Mat'l",
  "North Fin", "North Mat'l", "South Fin",
]
const SETS = ["RoomObjects", "RoomObjects", ...Array(7).fill("RoomFinishObj")]
const FIELDS: [string, string][] = [
  ["Property Set", ""],
  ["Property", "Number"],
  ["Format", "Number - Object"],
  ["Example", "101"],
  ["Total", "No"],
  ["Hide", "No"],
  ["Matrix", "No"],
  ["Max Cols.", ""],
]

const ColumnsGrid = () => (
  <div className={clsx("ml-[7px] flex min-h-0 flex-1 flex-col overflow-hidden bg-white pl-px", SUNKEN)}>
    <div className="min-h-0 flex-1 overflow-hidden">
      <table className="w-[814px] table-fixed border-separate border-spacing-0">
        <thead>
          <tr>
            <th className="w-[94px] bg-[#d4d0c8] p-0 pb-1" aria-label="Field">
              <div className={clsx("h-5", RAISED)} />
            </th>
            {COLUMNS.map((c) => (
              <th key={c} className="w-20 bg-[#d4d0c8] p-0 pb-1 font-normal">
                <div className={clsx("h-5 leading-[19px]", RAISED)}>{c}</div>
              </th>
            ))}
          </tr>
        </thead>
        <tbody>
          {FIELDS.map(([field, value], r) => (
            <tr key={field}>
              <td className={clsx("h-4 p-0 pl-[2px] leading-4", r === 0 && "bg-[#d4d0c8]")}>{field}</td>
              {COLUMNS.map((c, i) => (
                <td
                  key={c}
                  className={clsx(
                    "h-4 overflow-hidden p-0 text-center leading-4 whitespace-nowrap",
                    (r === 0 || i === 0) && "bg-[#d4d0c8]"
                  )}
                >
                  {r === 0 ? SETS[i] : i === 0 ? value : ""}
                </td>
              ))}
            </tr>
          ))}
        </tbody>
      </table>
    </div>
    <div className={clsx("flex h-4", DITHER)}>
      <ScrollButton dir="left" />
      <span className={clsx("w-[300px] bg-[#d4d0c8]", RAISED)} />
      <span className="flex-1" />
      <ScrollButton dir="right" />
    </div>
  </div>
)

const ColumnsPane = () => (
  <div className="ml-1 flex min-w-0 flex-1 flex-col border-t border-l border-t-black border-l-black">
    <div role="tablist" className="flex items-end pt-2 pl-[8px]">
      {TABS.map((t) => (
        <Tab key={t.label} label={t.label} className={t.width} active={t.active} />
      ))}
    </div>
    <div className="mr-[2px] ml-[6px] flex min-h-0 flex-1 flex-col border border-r-2 border-b-2 border-t-white border-r-[#505050] border-b-[#505050] border-l-white pt-4 pr-6 pb-3 pl-[14px]">
      <ColumnsGrid />
      <div className="mt-[2px]">
        <CheckBox label="Repeat First Column" name="repeat" />
      </div>
      <div className="mt-8 flex gap-[6px]">
        <PushButton className="w-[117px]" isDefault>Add Column...</PushButton>
        <PushButton className="w-[117px]">Add Formula Column...</PushButton>
        <PushButton className="w-[117px]" disabled>Add Header...</PushButton>
        <PushButton className="w-[117px]" disabled>Modify...</PushButton>
        <PushButton className="w-[117px]" disabled>Delete...</PushButton>
      </div>
    </div>
    <div className="mt-[3px] h-[18px] border-b border-[#e8e6e0] bg-white" />
  </div>
)

const STATUS_CELL =
  "h-4 shrink-0 overflow-hidden border border-t-[#808080] border-l-[#808080] border-r-white border-b-white leading-[15px] whitespace-nowrap pl-px"

const StyleManager = () => (
  <section
    aria-label="Style Manager"
    className={clsx(
      "absolute top-[78px] left-[144px] flex h-[748px] w-[1019px] flex-col border border-t-[#d4d0c8] border-r-[#404040] border-b-[#404040] border-l-[#d4d0c8] bg-[#d4d0c8] p-[3px] pl-1 text-[11px] text-black shadow-[inset_1px_1px_0_#fff,inset_-1px_-1px_0_#808080]",
      MS_SANS
    )}
  >
    <header className="flex h-[18px] shrink-0 items-center gap-[2px] bg-linear-to-r from-[#808080] to-[#c0c0c0] pr-[3px] text-[#d4d0c8]">
      <BrushIcon />
      <h1 className={clsx("flex-1 text-[12px] font-bold", TAHOMA)}>Style Manager</h1>
      <CloseButton />
    </header>
    <div className={clsx("flex h-[22px] shrink-0 items-center gap-[11px] border-b border-[#808080] pl-[3px] text-[#808080]", TAHOMA)}>
      <button>File</button>
      <button>Edit</button>
      <button>View</button>
    </div>
    <div className="flex h-[31px] shrink-0 items-center gap-[7px] border-t-2 border-t-white pl-[9px]">
      {TOOLBAR.map((t, i) =>
        t ? (
          <button key={i} aria-label={t.name}>{t.icon}</button>
        ) : (
          <span key={i} className="h-[18px] w-px bg-[#808080] shadow-[1px_0_0_#fff]" />
        )
      )}
    </div>
    <div className="flex min-h-0 flex-1 pr-[3px]">
      <StyleTree />
      <ColumnsPane />
    </div>
    <div className="flex h-[37px] shrink-0 items-center gap-[6px] pr-3 pl-2">
      <button aria-label="Viewer" className={clsx("flex size-[25px] items-center justify-center", RAISED)}>
        <Icon>
          <rect x=".5" y=".5" width="14" height="14" fill="#e8ece8" />
          <path d="M1 2h13" strokeWidth="2" />
          <circle cx="7" cy="9" r="4" fill="#6fae7c" stroke="#3f7a4c" />
          <path d="M9 2v10l2.500-2 2 4 1.500-1-2-3.500h3z" fill="#fff" stroke="#222" strokeWidth=".7" />
        </Icon>
      </button>
      <span className="flex-1" />
      <PushButton className="w-[75px]" isDefault>OK</PushButton>
      <PushButton className="w-[75px]">Cancel</PushButton>
      <PushButton className="w-[75px]">Apply</PushButton>
      <PushButton className="w-[75px]">Help</PushButton>
    </div>
    <div className={clsx("flex shrink-0 gap-[2px] border-t border-[#808080] pt-[3px] shadow-[inset_0_1px_0_#fff]", TAHOMA)}>
      <span className={clsx("w-[216px]", STATUS_CELL)} />
      <span className={clsx("w-[131px]", STATUS_CELL)}>Drawing Sorted</span>
      <span className={clsx("w-[253px]", STATUS_CELL)}>3NORTON.dwg</span>
      <span className={clsx("w-[22px]", STATUS_CELL)} />
      <span className={clsx("w-[278px]", STATUS_CELL)}>Schedule Table Styles</span>
      <span className={clsx("w-[79px]", STATUS_CELL)}>EXISTING FINISHES</span>
      <svg width="14" height="14" viewBox="0 0 14 14" stroke="#909090" strokeWidth="1.500" className="ml-auto self-end">
        <path d="M2 13 13 2M6 13l7-7M10 13l3-3" />
      </svg>
    </div>
  </section>
)

// ============================================================
// Add Column dialog
// ============================================================

const PROPERTIES: [string, string][] = [
  ["BaseColor", "Base Color"], ["BaseFinish", "Base Fin"], ["BaseMaterial", "Base Mat'l"],
  ["CeilingColor", "Ceiling Color"], ["CeilingFinish", "Ceiling Fin"], ["CeilingMaterial", "Ceiling Mat'l"],
  ["EastColor", "East Color"], ["EastFinish", "East Fin"], ["EastMaterial", "East Mat'l"],
  ["FloorColor", "Floor Color"], ["FloorFinish", "Floor Fin"], ["FloorMaterial", "Floor Mat'l"],
  ["NorthColor", "North Color"], ["NorthFinish", "North Fin"], ["NorthMaterial", "North Mat'l"],
  ["Remarks", "Remarks"],
  ["SouthColor", "South Color"], ["SouthFinish", "South Fin"], ["SouthMaterial", "South Mat'l"],
  ["", ""],
]

const PropertyList = () => (
  <div className={clsx("flex min-h-0 flex-1 overflow-hidden bg-white pt-px pl-px", SUNKEN)}>
    <div className="min-w-0 flex-1 overflow-hidden">
      <table className="w-full table-fixed border-separate border-spacing-0">
        <tbody>
          <tr>
            <td className="h-[17px] w-[17px] p-0">
              <svg width="17" height="16" viewBox="0 0 17 16" fill="none" stroke="#606880">
                <rect x="7.500" y="3.500" width="8" height="8" fill="#fff" />
                <path d="M9 7.500h5" stroke="#000" />
              </svg>
            </td>
            <td className="w-[94px] border-b border-l border-[#c4c4c4] p-0 pl-[3px] leading-4 font-bold whitespace-nowrap">
              3earch$0$Ro...
            </td>
            <td className="border-b border-l border-[#c4c4c4] p-0" />
          </tr>
          {PROPERTIES.map(([name, heading], i) => (
            <tr key={name}>
              <td className="h-[17px] p-0" />
              <td className="border-b border-l border-[#c4c4c4] p-0 pl-[2px]">
                <div className="flex h-4 items-center">
                  <PropertyIcon />
                  <span className={clsx("leading-4", i === 0 && "bg-[#d4d0c8] pr-[6px]")}>{name}</span>
                </div>
              </td>
              <td className="border-b border-l border-[#c4c4c4] p-0 pl-[5px] leading-4">{heading}</td>
            </tr>
          ))}
        </tbody>
      </table>
    </div>
    <div className={clsx("flex w-4 shrink-0 flex-col", DITHER)}>
      <ScrollButton dir="up" />
      <span className={clsx("h-[99px] bg-[#d4d0c8]", RAISED)} />
      <span className="flex-1" />
      <ScrollButton dir="down" />
    </div>
  </div>
)

const Group: React.FC<{ title: string; className: string; children: React.ReactNode }> = ({
  title,
  className,
  children,
}) => (
  <fieldset
    className={clsx(
      "min-w-0 border border-[#808080] px-[13px] shadow-[1px_1px_0_#fff,inset_1px_1px_0_#fff]",
      className
    )}
  >
    <legend className="-ml-2 bg-[#d4d0c8] px-[2px] leading-[14px]">{title}</legend>
    {children}
  </fieldset>
)

const FieldRow: React.FC<{ label: string; id: string; className: string; children: React.ReactNode }> = ({
  label,
  id,
  className,
  children,
}) => (
  <div className={clsx("flex items-center", className)}>
    <label htmlFor={id} className="w-[104px] shrink-0">{label}</label>
    <div className="min-w-0 flex-1 overflow-hidden whitespace-nowrap">{children}</div>
  </div>
)

const AddColumnDialog = () => {
  const heading = React.useRef<HTMLInputElement>(null)

  React.useEffect(() => {
    heading.current?.focus()
    heading.current?.select()
  }, [])

  return (
    <section
      role="dialog"
      aria-label="Add Column"
      className={clsx(
        "absolute top-[231px] left-[529px] flex w-[638px] flex-col border border-t-[#d4d0c8] border-r-[#404040] border-b-[#404040] border-l-[#d4d0c8] bg-[#d4d0c8] px-[3px] pt-[2px] pb-3 text-[11px] text-black shadow-[inset_1px_1px_0_#fff,inset_-1px_-1px_0_#808080]",
        TAHOMA
      )}
    >
      <header className="flex h-[19px] items-center gap-[2px] bg-linear-to-r from-[#0a246a] to-[#a6caf0] pr-[3px] pl-[2px] text-white">
        <AcadIcon />
        <h2 className="flex-1 text-[12px] font-bold">Add Column</h2>
        <CloseButton />
      </header>
      <div className="flex gap-[14px] px-[11px] pt-3 pr-4">
        <div className="flex min-w-0 flex-1 flex-col">
          <div role="tablist" className="flex items-end pl-[2px]">
            <Tab label="Alphabetical" className="w-[68px]" />
            <Tab label="Categorized" className="w-[74px]" active />
          </div>
          <div className="flex h-[354px] flex-col border border-r-2 border-b-2 border-t-white border-r-[#505050] border-b-[#505050] border-l-white p-[3px] pt-1">
            <PropertyList />
          </div>
        </div>
        <div className="flex w-[239px] flex-col gap-[11px] pt-px">
          <Group title="Column Properties" className="h-[259px] pt-[5px]">
            <FieldRow label="Property Set:" id="pset" className="h-5">
              <output id="pset">3earch$0$RoomFinishObjects</output>
            </FieldRow>
            <FieldRow label="Property:" id="prop" className="h-5">
              <output id="prop">BaseColor</output>
            </FieldRow>
            <FieldRow label="Heading:" id="heading" className="h-[26px]">
              <input
                ref={heading}
                id="heading"
                defaultValue="Base Color"
                className={clsx(
                  "h-6 w-full bg-white pb-1 pl-1 outline-none selection:bg-[#0a246a] selection:text-white",
                  SUNKEN
                )}
              />
            </FieldRow>
            <FieldRow label="Data Format:" id="format" className="h-7">
              <Combo id="format" label="Data Format" value="3earch$0$Case - Upper" />
            </FieldRow>
            <FieldRow label="Example:" id="example" className="h-[22px]">
              <output id="example">--</output>
            </FieldRow>
            <div className="flex h-[29px] items-center gap-2">
              <CheckBox name="Override cell format" disabled />
              <PushButton className="flex-1">Override Cell Format...</PushButton>
            </div>
            <div className="flex h-[29px] items-center gap-2">
              <CheckBox name="Override header format" disabled />
              <PushButton className="flex-1">Override Header Format...</PushButton>
            </div>
            <div className="flex h-10 items-center">
              <div className="w-[81px]">
                <CheckBox label="Matrix" name="matrix" />
              </div>
              <label htmlFor="max" className="flex-1">Max Columns:</label>
              <div className={clsx("flex h-6 w-8 p-px", SUNKEN)}>
                <input id="max" disabled defaultValue="3" className="w-3 min-w-0 flex-1 text-center text-[#808080]" />
                <div className="flex w-[14px] flex-col">
                  <span className={clsx("flex flex-1 items-center justify-center", RAISED)}><Arrow dir="up" size={4} color="#808080" /></span>
                  <span className={clsx("flex flex-1 items-center justify-center", RAISED)}><Arrow dir="down" size={4} color="#808080" /></span>
                </div>
              </div>
            </div>
            <div className="flex h-4 items-center">
              <div className="w-[81px]">
                <CheckBox label="Total" name="total" />
              </div>
              <CheckBox label="Hide" name="hide" />
            </div>
          </Group>
          <Group title="Column Position" className="h-[103px] pt-[11px]">
            <div className="flex h-4 items-center gap-[21px] pl-px">
              <Radio label="Insert Before" />
              <Radio label="Insert After" checked />
            </div>
            <label htmlFor="column" className="block pt-[10px] leading-[14px]">Column:</label>
            <div className="pt-[5px]">
              <Combo id="column" label="Column" value="" />
            </div>
          </Group>
        </div>
      </div>
      <div className="mt-3 flex justify-center gap-[14px] pr-1">
        <PushButton className="w-[75px]" isDefault>OK</PushButton>
        <PushButton className="w-[75px]">Cancel</PushButton>
      </div>
    </section>
  )
}

// ============================================================
// Docked palette edge
// ============================================================

const PaletteEdge = () => (
  <aside className="flex w-[7px] shrink-0 flex-col overflow-hidden bg-[#d4d0c8]">
    <div className="flex h-[116px] shrink-0 flex-col justify-between bg-[#dcd9d2] py-2 pl-[3px]">
      {[0, 1, 2, 3].map((i) => (
        <span key={i} className="h-4 border-l-2 border-dotted border-[#808080]" />
      ))}
    </div>
    <div className="flex-1 border-t border-l-2 border-[#404040] bg-[repeating-linear-gradient(#d4d0c8_0_20px,#808080_20px_21px)]" />
  </aside>
)

export default function App() {
  return (
    <div className={clsx("relative flex h-screen w-full overflow-hidden bg-[#5a5a5a] leading-4", TAHOMA)}>
      <main className="flex min-w-0 flex-1 flex-col">
        <MenuBar />
        <Ribbon />
        <div className="h-[6px] shrink-0 bg-[#6a6a6a]" />
        <Drawing />
        <LayoutTabs />
        <StatusBar />
      </main>
      <PaletteEdge />
      <StyleManager />
      <AddColumnDialog />
    </div>
  )
}
